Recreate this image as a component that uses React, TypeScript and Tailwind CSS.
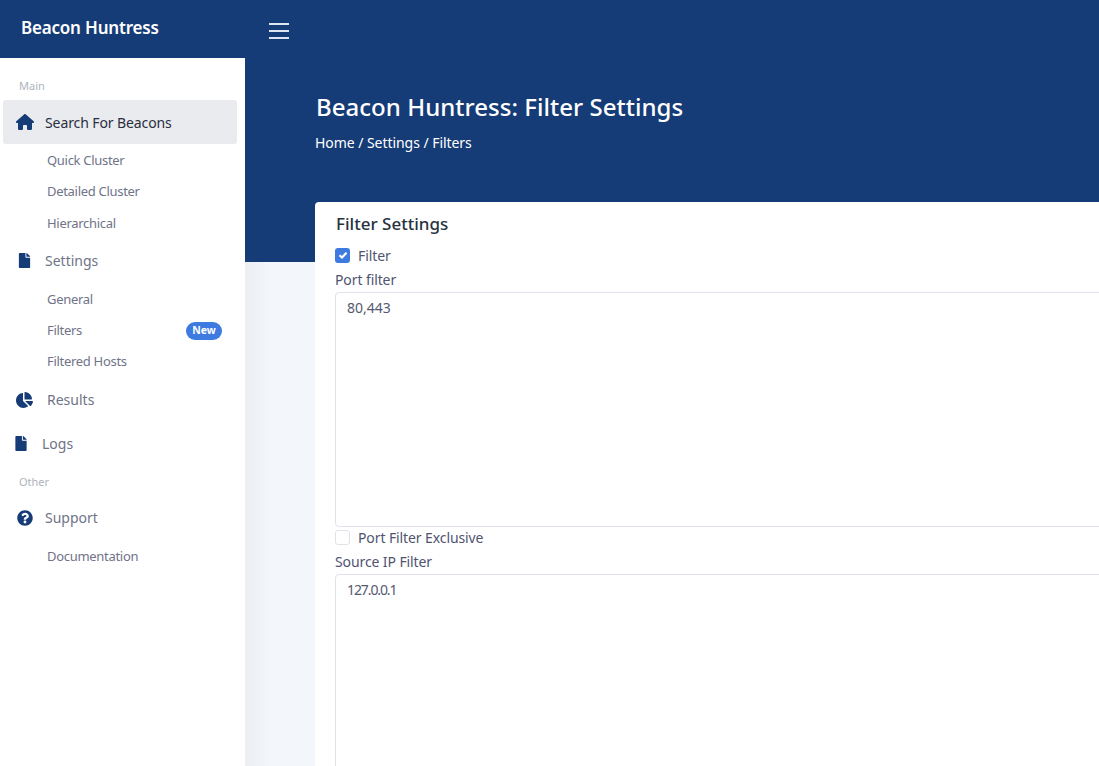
import { FaChartPie, FaFile, FaQuestionCircle } from 'react-icons/fa';
import { FaHouse } from 'react-icons/fa6';

const body = { fontFamily: '"Noto Sans", sans-serif' };

function SubLink({ label, badge }: { label: string; badge?: string }) {
  return (
    <div className="h-[31.3px] pl-[47px] pr-[23px] flex items-center justify-between text-[13px] tracking-[-0.3px] text-[#6f7488]">
      <span>{label}</span>
      {badge && (
        <span className="h-[18px] w-[36px] rounded-full bg-[#3d7be0] text-white text-[10.5px] tracking-normal font-bold flex items-center justify-center">
          {badge}
        </span>
      )}
    </div>
  );
}

function Sidebar() {
  return (
    <aside className="w-[245px] shrink-0 bg-white h-full relative z-10">
      <div className="h-[58px] bg-[#163c77] flex items-center pl-[21px] pb-[2px] text-white text-[17px] font-semibold tracking-[-0.2px]">
        Beacon Huntress
      </div>
      <div className="pt-[20px] pl-[19px] text-[11px] leading-[16px] text-[#adb3bd]">Main</div>
      <div className="ml-[3px] mr-[8px] mt-[6px] h-[44px] rounded-[3px] bg-[#e9ebee] flex items-center text-[#2a2e3f] text-[14px] tracking-[-0.1px]">
        <FaHouse className="ml-[13px] w-[18px] h-[16px] text-[#163c77]" />
        <span className="ml-[11px]">Search For Beacons</span>
      </div>
      <div className="pt-[1px]">
        <SubLink label="Quick Cluster" />
        <SubLink label="Detailed Cluster" />
        <div className="pt-[1px]">
          <SubLink label="Hierarchical" />
        </div>
      </div>
      <div className="h-[44px] -mt-[1px] flex items-center text-[14px] text-[#6f7488]">
        <FaFile className="ml-[18px] w-[13px] h-[15px] text-[#163c77]" />
        <span className="ml-[14px]">Settings</span>
      </div>
      <div className="pt-[1px]">
        <SubLink label="General" />
        <SubLink label="Filters" badge="New" />
        <SubLink label="Filtered Hosts" />
      </div>
      <div className="h-[44px] flex items-center text-[14px] text-[#6f7488]">
        <FaChartPie className="ml-[16px] w-[17px] h-[16px] text-[#163c77]" />
        <span className="ml-[14px]">Results</span>
      </div>
      <div className="h-[44px] flex items-center text-[14px] text-[#6f7488]">
        <FaFile className="ml-[15px] w-[12px] h-[15px] text-[#163c77]" />
        <span className="ml-[15px]">Logs</span>
      </div>
      <div className="pt-[8px] pl-[19px] text-[11px] leading-[16px] text-[#adb3bd]">Other</div>
      <div className="h-[44px] mt-[6px] flex items-center text-[14px] text-[#6f7488]">
        <FaQuestionCircle className="ml-[17px] w-[16px] h-[16px] text-[#163c77]" />
        <span className="ml-[12px]">Support</span>
      </div>
      <div className="pt-[1px]">
        <SubLink label="Documentation" />
      </div>
    </aside>
  );
}

function Check({ checked, label }: { checked?: boolean; label: string }) {
  return (
    <div className="h-[24px] flex items-center text-[14px] tracking-[-0.1px] text-[#4f5470]">
      {checked ? (
        <span className="w-[15px] h-[15px] rounded-[3px] bg-[#3d7be0] flex items-center justify-center">
          <svg viewBox="0 0 10 10" className="w-[10px] h-[10px]" fill="none" stroke="white" strokeWidth="2.2">
            <polyline points="1.5,5.2 4,7.5 8.5,2.8" />
          </svg>
        </span>
      ) : (
        <span className="w-[15px] h-[15px] rounded-[3px] border border-[#dfe2e8] bg-white" />
      )}
      <span className="ml-[8px]">{label}</span>
    </div>
  );
}

function Field({ label, value, narrow }: { label: string; value: string; narrow?: boolean }) {
  return (
    <div>
      <div className="h-[25px] pb-[1px] flex items-center text-[14px] tracking-[-0.1px] text-[#4f5470]">{label}</div>
      <textarea
        readOnly
        value={value}
        className={
          narrow
            ? 'block w-full h-[235px] rounded-[4px] border border-[#dfe2e8] bg-white px-[11px] pt-[4px] text-[14px] leading-[21px] tracking-[-1.1px] text-[#55596e] resize-none outline-none'
            : 'block w-full h-[235px] rounded-[4px] border border-[#dfe2e8] bg-white px-[11px] pt-[4px] text-[14px] leading-[21px] text-[#55596e] resize-none outline-none'
        }
      />
    </div>
  );
}

export default function App() {
  return (
    <div className="w-[1099px] h-[766px] overflow-hidden flex bg-[#f3f6fb]" style={body}>
      <Sidebar />
      <main className="flex-1 min-w-0 relative">
        <div className="absolute top-[262px] left-0 bottom-0 w-[24px] bg-gradient-to-r from-[#eceef3] to-[#f3f6fb]" />
        <div className="h-[262px] bg-[#163c77] pt-[23px] relative">
          <div className="ml-[24px] w-[20px] flex flex-col gap-[5px]">
            <div className="h-[2px] bg-[#dfe5ee]" />
            <div className="h-[2px] bg-[#dfe5ee]" />
            <div className="h-[2px] bg-[#dfe5ee]" />
          </div>
          <h1 className="ml-[71px] mt-[50px] text-[24px] leading-[36px] font-medium text-white tracking-[0.03px]">
            Beacon Huntress: Filter Settings
          </h1>
          <div className="ml-[70px] mt-[7px] text-[14px] leading-[21px] tracking-[-0.05px] text-white">Home / Settings / Filters</div>
        </div>
        <section className="relative ml-[70px] -mt-[60px] w-[900px] rounded-t-[4px] bg-white pl-[20px] pr-[20px] pt-[10px]">
          <h2 className="ml-[1px] text-[17px] leading-[24px] font-medium text-[#27323f]">Filter Settings</h2>
          <div className="mt-[7px]">
            <Check checked label="Filter" />
            <Field label="Port filter" value="80,443" />
            <div className="-mt-[2px]">
              <Check label="Port Filter Exclusive" />
            </div>
            <Field label="Source IP Filter" value="127.0.0.1" narrow />
          </div>
        </section>
      </main>
    </div>
  );
}
